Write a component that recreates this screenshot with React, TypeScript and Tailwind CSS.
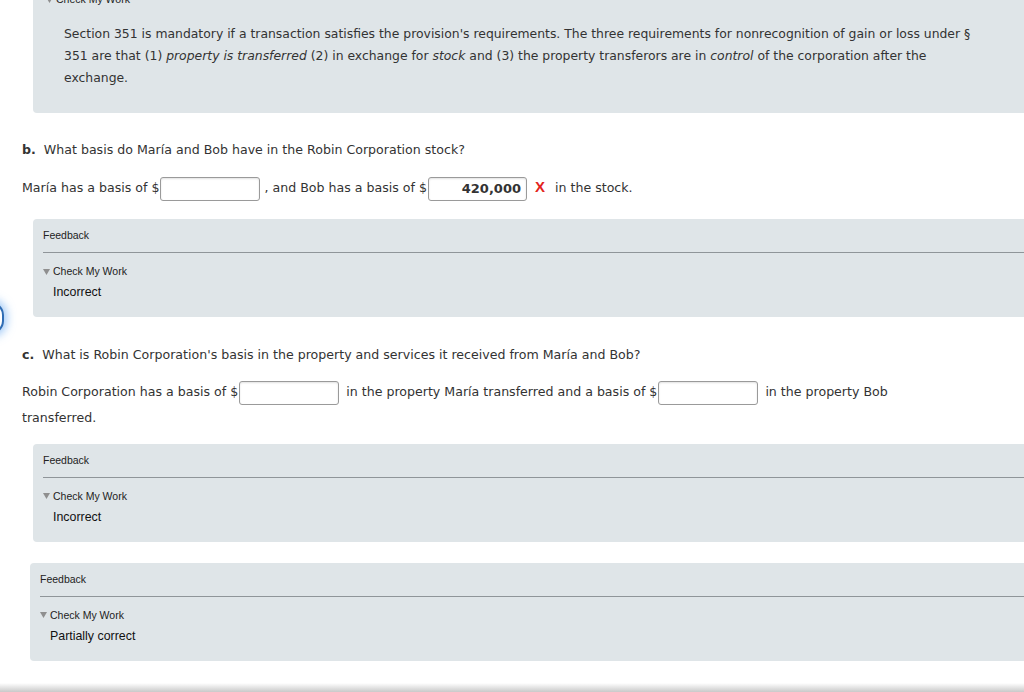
import React from "react";

const verdana = { fontFamily: '"DejaVu Sans", Verdana, sans-serif' };
const arial = { fontFamily: '"Liberation Sans", Arial, Helvetica, sans-serif' };

function Triangle() {
  return (
    <svg width="7" height="7" viewBox="0 0 7 7" className="mr-[3px] inline-block">
      <polygon points="0,1 7,1 3.5,7" fill="#8f8f8f" />
    </svg>
  );
}

function AmountInput({ value, width = "w-[100px]" }: { value?: string; width?: string }) {
  return (
    <span
      className={`ml-[1px] inline-block h-[24px] ${width} rounded-[3px] border border-[#9a9a9a] bg-white pr-[5px] text-right align-middle text-[13px] font-bold text-[#333] leading-[22px] shadow-[inset_0_1px_2px_rgba(0,0,0,0.12)]`}
    >
      {value}
    </span>
  );
}

function FeedbackBox({ result, indent = "ml-[33px]" }: { result: string; indent?: string }) {
  return (
    <div className={`${indent} h-[98px] rounded-l-[4px] bg-[#dfe5e8] pt-[9px]`} style={arial}>
      <div className="pl-[10px] text-[10.5px] leading-[14px] text-[#222]">Feedback</div>
      <div className="ml-[10px] mt-[10px] h-px bg-[#8f9599]" />
      <div className="mt-[11px] flex items-center pl-[10px] text-[10.5px] leading-[14px] text-[#222]">
        <Triangle />
        Check My Work
      </div>
      <div className="mt-[6px] pl-[20px] text-[12.4px] leading-[16px] text-[#111]">{result}</div>
    </div>
  );
}

export default function App() {
  return (
    <div className="relative h-[692px] w-[1024px] overflow-hidden bg-white text-[12.6px] text-[#333]" style={verdana}>
      {/* explanation from part a */}
      <div className="ml-[33px] -mt-[14px] h-[127px] rounded-bl-[4px] bg-[#dfe5e8]">
        <div className="flex items-center pl-[13px] pt-[6px] text-[10.5px] leading-[14px] text-[#222]" style={arial}>
          <Triangle />
          Check My Work
        </div>
        <p className="mt-[17px] w-[975px] pl-[31px] text-[12.4px] leading-[22px] text-[#333]">
          Section 351 is mandatory if a transaction satisfies the provision's requirements. The three requirements
          for nonrecognition of gain or loss under §<br />351 are that (1) <i>property is transferred</i> (2) in
          exchange for <i>stock</i> and (3) the property transferors are in <i>control</i> of the corporation after
          the
          <br />
          exchange.
        </p>
      </div>

      {/* part b */}
      <p className="ml-[22px] mt-[26px] leading-[22px]">
        <b>b.</b>&nbsp; What basis do María and Bob have in the Robin Corporation stock?
      </p>
      <p className="ml-[22px] mt-[13px] leading-[25px]">
        María has a basis of $<AmountInput />
        <span className="ml-[4px]">, and Bob has a basis of $</span>
        <AmountInput value="420,000" width="w-[99px]" />
        <span className="ml-[8px] font-bold text-[#e3231d]" style={arial}>
          <span className="text-[15px]">X</span>
        </span>
        <span className="ml-[10px]">in the stock.</span>
      </p>

      <div className="mt-[18px]">
        <FeedbackBox result="Incorrect" />
      </div>

      {/* part c */}
      <p className="ml-[22px] mt-[27px] leading-[22px]">
        <b>c.</b>&nbsp; What is Robin Corporation's basis in the property and services it received from María and Bob?
      </p>
      <p className="ml-[22px] mt-[13px] w-[900px] leading-[25px]">
        Robin Corporation has a basis of $<AmountInput />
        <span className="ml-[7px]">in the property María transferred and a basis of $</span>
        <AmountInput />
        <span className="ml-[7px]">in the property Bob</span>
        <br />
        transferred.
      </p>

      <div className="mt-[14px]">
        <FeedbackBox result="Incorrect" />
      </div>

      <div className="mt-[21px]">
        <FeedbackBox result="Partially correct" indent="ml-[30px]" />
      </div>

      <div className="mt-[22px] h-[9px] bg-gradient-to-b from-white to-[#c9c9c9]" />

      {/* focus ring peeking in from the left edge */}
      <div className="absolute left-[-22px] top-[302px] h-[32px] w-[26px] rounded-full border-[2px] border-[#2f6db5] shadow-[0_0_8px_3px_rgba(90,160,240,0.55)]" />
    </div>
  );
}
